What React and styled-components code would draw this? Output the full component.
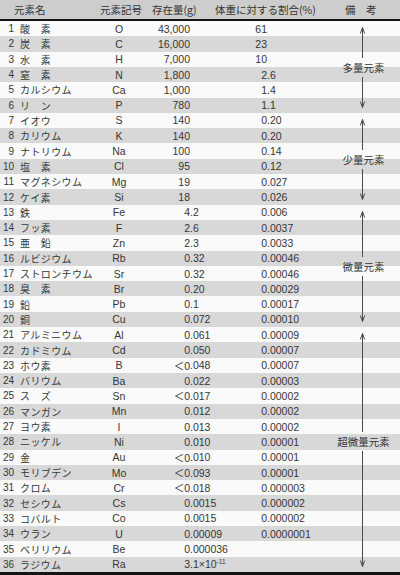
import React from "react";
import styled, { createGlobalStyle } from "styled-components";

const GlobalStyle = createGlobalStyle`
  html, body {
    margin: 0;
    padding: 0;
    background: #fafafa;
  }
  body {
    width: 400px;
    height: 575px;
    overflow: hidden;
    font-family: "Liberation Sans", "Noto Sans CJK JP", sans-serif;
    color: #363636;
  }
`;

const elements = [
  ["1", "酸　素", "O", "43,000", "61"],
  ["2", "炭　素", "C", "16,000", "23"],
  ["3", "水　素", "H", "7,000", "10"],
  ["4", "窒　素", "N", "1,800", "2.6"],
  ["5", "カルシウム", "Ca", "1,000", "1.4"],
  ["6", "リ　ン", "P", "780", "1.1"],
  ["7", "イオウ", "S", "140", "0.20"],
  ["8", "カリウム", "K", "140", "0.20"],
  ["9", "ナトリウム", "Na", "100", "0.14"],
  ["10", "塩　素", "Cl", "95", "0.12"],
  ["11", "マグネシウム", "Mg", "19", "0.027"],
  ["12", "ケイ素", "Si", "18", "0.026"],
  ["13", "鉄", "Fe", "4.2", "0.006"],
  ["14", "フッ素", "F", "2.6", "0.0037"],
  ["15", "亜　鉛", "Zn", "2.3", "0.0033"],
  ["16", "ルビジウム", "Rb", "0.32", "0.00046"],
  ["17", "ストロンチウム", "Sr", "0.32", "0.00046"],
  ["18", "臭　素", "Br", "0.20", "0.00029"],
  ["19", "鉛", "Pb", "0.1", "0.00017"],
  ["20", "銅", "Cu", "0.072", "0.00010"],
  ["21", "アルミニウム", "Al", "0.061", "0.00009"],
  ["22", "カドミウム", "Cd", "0.050", "0.00007"],
  ["23", "ホウ素", "B", "＜0.048", "0.00007"],
  ["24", "バリウム", "Ba", "0.022", "0.00003"],
  ["25", "ス　ズ", "Sn", "＜0.017", "0.00002"],
  ["26", "マンガン", "Mn", "0.012", "0.00002"],
  ["27", "ヨウ素", "I", "0.013", "0.00002"],
  ["28", "ニッケル", "Ni", "0.010", "0.00001"],
  ["29", "金", "Au", "＜0.010", "0.00001"],
  ["30", "モリブデン", "Mo", "＜0.093", "0.00001"],
  ["31", "クロム", "Cr", "＜0.018", "0.000003"],
  ["32", "セシウム", "Cs", "0.0015", "0.000002"],
  ["33", "コバルト", "Co", "0.0015", "0.000002"],
  ["34", "ウラン", "U", "0.00009", "0.0000001"],
  ["35", "ベリリウム", "Be", "0.000036", ""],
  ["36", "ラジウム", "Ra", "3.1", ""],
];

const groups = [
  { label: "多量元素", start: 1, span: 6, top: 1 },
  { label: "少量元素", start: 7, span: 6, top: 1 },
  { label: "微量元素", start: 13, span: 8, top: 1 },
  { label: "超微量元素", start: 21, span: 16, top: 0.85 },
];

const Page = styled.div`
  width: 400px;
  height: 575px;
  display: flex;
  flex-direction: column;
`;

const Header = styled.div`
  display: grid;
  grid-template-columns: 100px 52px 63px 130px 55px;
  align-items: center;
  height: 19px;
  background: #cdcdcd;
  border-bottom: 2px solid #151515;
  font-family: "Noto Sans CJK JP", sans-serif;
  font-size: 10.5px;
  color: #333;
  white-space: nowrap;
`;

const HeadCell = styled.div`
  padding-left: ${(p) => p.$pad || 0}px;
  line-height: 19px;
`;

const Body = styled.div`
  display: grid;
  grid-template-columns: 97px 44px 91px 94px 74px;
  grid-template-rows: repeat(36, 1fr);
  height: 551px;
  border-bottom: 3px solid #151515;
  font-size: 10.5px;
`;

const Band = styled.div`
  grid-column: 1 / -1;
  grid-row: ${(p) => p.$row};
  background: ${(p) => (p.$shade ? "#d8d8d8" : "#fafafa")};
`;

const Cell = styled.div`
  grid-row: ${(p) => p.$row};
  grid-column: ${(p) => p.$col};
  display: flex;
  align-items: center;
  white-space: nowrap;
  justify-content: ${(p) => (p.$center ? "center" : "flex-start")};
`;

const Num = styled.span`
  width: 14px;
  text-align: right;
  font-size: 10px;
`;

const Name = styled.span`
  margin-left: 6px;
  font-family: "Noto Sans CJK JP", sans-serif;
  font-size: 10px;
  letter-spacing: 0.4px;
  color: #383838;
`;

const IntPart = styled.span`
  width: ${(p) => p.$w}px;
  text-align: right;
  font-family: "Liberation Sans", "Noto Sans CJK JP", sans-serif;
`;

const FracPart = styled.span`
  text-align: left;
`;

const Sup = styled.sup`
  font-size: 6.5px;
  vertical-align: 4px;
  line-height: 0;
`;

const Group = styled.div`
  grid-column: 5;
  grid-row: ${(p) => p.$start} / span ${(p) => p.$span};
  display: flex;
  flex-direction: column;
  align-items: center;
  padding: 6px 0 5px 0;
  margin-left: -2px;
`;

const Line = styled.div`
  flex: ${(p) => p.$grow} 1 0;
  width: 1px;
  background: #4a4a4a;
`;

const Label = styled.div`
  font-family: "Noto Sans CJK JP", sans-serif;
  font-size: 10.5px;
  color: #333;
  margin: 4px 0;
  margin-left: 3px;
  white-space: nowrap;
  line-height: 11px;
`;

const Arrow = ({ down }) => (
  <svg
    width="7"
    height="8"
    viewBox="0 0 7 8"
    style={{ display: "block", transform: down ? "rotate(180deg)" : "none" }}
  >
    <path d="M3.5 0.5 V8" stroke="#4a4a4a" strokeWidth="1" />
    <path d="M1.3 6.5 L3.5 0.5 L5.7 6.5" fill="none" stroke="#4a4a4a" strokeWidth="1" />
  </svg>
);

const splitValue = (v) => {
  const i = v.indexOf(".");
  if (i < 0) return [v, ""];
  return [v.slice(0, i), v.slice(i)];
};

const Value = ({ value, w, sci }) => {
  const [int, frac] = splitValue(value);
  return (
    <>
      <IntPart $w={w}>{int}</IntPart>
      <FracPart>
        {frac}
        {sci && (
          <>
            ×10<Sup>-11</Sup>
          </>
        )}
      </FracPart>
    </>
  );
};

export default function App() {
  return (
    <Page>
      <GlobalStyle />
      <Header>
        <HeadCell $pad={14}>元素名</HeadCell>
        <HeadCell>元素記号</HeadCell>
        <HeadCell>存在量(g)</HeadCell>
        <HeadCell>体重に対する割合(%)</HeadCell>
        <HeadCell>備　考</HeadCell>
      </Header>
      <Body>
        {elements.map(([no, name, sym, amount, pct], i) => {
          const row = i + 1;
          return (
            <React.Fragment key={no}>
              <Band $row={row} $shade={row % 2 === 0} />
              <Cell $row={row} $col={1}>
                <Num>{no}</Num>
                <Name>{name}</Name>
              </Cell>
              <Cell $row={row} $col={2} $center>
                {sym}
              </Cell>
              <Cell $row={row} $col={3}>
                <Value value={amount} w={49} sci={no === "36"} />
              </Cell>
              <Cell $row={row} $col={4}>
                {pct && <Value value={pct} w={35} />}
              </Cell>
            </React.Fragment>
          );
        })}
        {groups.map((g) => (
          <Group key={g.label} $start={g.start} $span={g.span}>
            <Arrow />
            <Line $grow={g.top} />
            <Label>{g.label}</Label>
            <Line $grow={1} />
            <Arrow down />
          </Group>
        ))}
      </Body>
    </Page>
  );
}
